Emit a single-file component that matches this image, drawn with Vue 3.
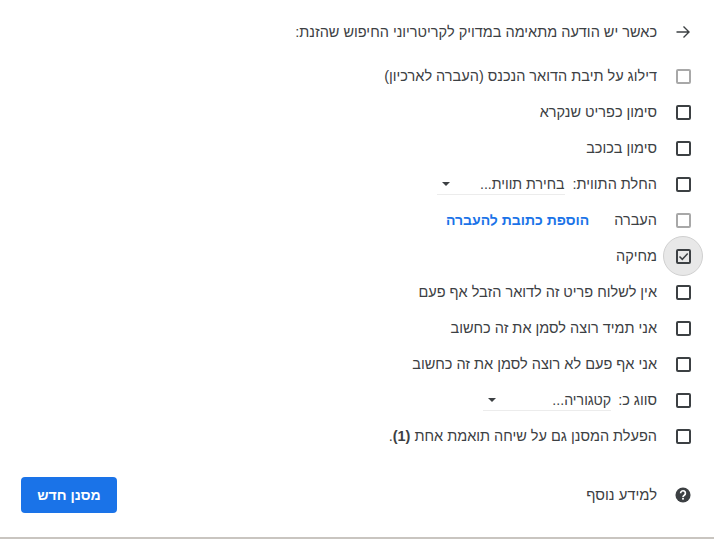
<script setup>
const rows = [
  { id: 1, label: 'דילוג על תיבת הדואר הנכנס (העברה לארכיון)', muted: true },
  { id: 2, label: 'סימון כפריט שנקרא' },
  { id: 3, label: 'סימון בכוכב' },
  { id: 4, label: 'החלת התווית:', select: 'בחירת תווית...', selectClass: 'sel-label' },
  { id: 5, label: 'העברה', link: 'הוספת כתובת להעברה', muted: true },
  { id: 6, label: 'מחיקה', checked: true },
  { id: 7, label: 'אין לשלוח פריט זה לדואר הזבל אף פעם' },
  { id: 8, label: 'אני תמיד רוצה לסמן את זה כחשוב' },
  { id: 9, label: 'אני אף פעם לא רוצה לסמן את זה כחשוב' },
  { id: 10, label: 'סווג כ:', select: 'קטגוריה...', selectClass: 'sel-cat' },
  { id: 11, label: 'הפעלת המסנן גם על שיחה תואמת אחת', count: '(1)' }
]
</script>

<template>
  <div class="page" dir="rtl">
    <header class="head">
      <span class="lead">
        <svg width="16" height="16" viewBox="0 0 16 16" fill="none" stroke="#3c4043" stroke-width="1.4">
          <path d="M1.5 8H14M8.5 2.5 14 8l-5.5 5.5" />
        </svg>
      </span>
      <span>כאשר יש הודעה מתאימה במדויק לקריטריוני החיפוש שהזנת:</span>
    </header>

    <ul class="list">
      <li v-for="r in rows" :key="r.id" class="row">
        <span class="lead">
          <span class="box" :class="{ muted: r.muted, on: r.checked }">
            <svg v-if="r.checked" width="11" height="11" viewBox="0 0 11 11" fill="none" stroke="#3c4043" stroke-width="1.5">
              <path d="M1.5 5.5 4.3 8.3 9.7 2.6" />
            </svg>
          </span>
        </span>
        <span>{{ r.label }}<template v-if="r.count">{{ ' ' }}<b class="count">{{ r.count }}</b>.</template></span>
        <span v-if="r.select" class="select" :class="r.selectClass">
          <span class="sel-text">{{ r.select }}</span>
          <i class="caret"></i>
        </span>
        <a v-if="r.link" class="link" href="#">{{ r.link }}</a>
      </li>
    </ul>

    <footer class="foot">
      <span class="lead">
        <svg width="18" height="18" viewBox="0 0 18 18">
          <circle cx="9" cy="9" r="8.5" fill="#3c4043" />
          <path d="M6.3 7a2.7 2.7 0 1 1 4.2 2.2c-.9.6-1.5 1-1.5 2" fill="none" stroke="#fff" stroke-width="1.9" />
          <rect x="8" y="12.2" width="2" height="2" fill="#fff" />
        </svg>
      </span>
      <span class="more">למידע נוסף</span>
      <button class="create" type="button">מסנן חדש</button>
    </footer>
    <div class="strip"></div>
  </div>
</template>

<style>
html, body { margin: 0; background: #fff; }
</style>

<style scoped>
.page {
  width: 714px;
  height: 539px;
  box-sizing: border-box;
  padding: 14px 0 0;
  position: relative;
  isolation: isolate;
  overflow: hidden;
  font: 14.5px/20px "Liberation Sans", Roboto, sans-serif;
  color: #3c4043;
  background: #fff;
}
.head, .row, .foot {
  display: flex;
  align-items: center;
  height: 36px;
  padding-right: 23px;
}
.lead {
  flex: none;
  width: 16px;
  margin-left: 18px;
  display: flex;
  justify-content: center;
  align-items: center;
  position: relative;
}
.list { list-style: none; margin: 8px 0 0; padding: 0; }
.box {
  width: 15px;
  height: 15px;
  box-sizing: border-box;
  border: 2px solid #3c4043;
  border-radius: 2px;
  display: flex;
  align-items: center;
  justify-content: center;
  position: relative;
}
.box.muted { border-color: #a8a8a8; }
.box.on::before {
  content: "";
  position: absolute;
  left: 50%;
  top: 50%;
  width: 40px;
  height: 40px;
  box-sizing: border-box;
  margin: -20px 0 0 -20px;
  border-radius: 50%;
  background: #e8e8e8;
  border: 1px solid #d0d0d0;
  z-index: -1;
}
.box svg { flex: none; }
.select {
  display: flex;
  justify-content: space-between;
  align-items: center;
  height: 20px;
  border-bottom: 1px solid #ececec;
  margin-right: 8px;
  padding-left: 5px;
  width: 123px;
}
.sel-text { font-size: 14.2px; }
.sel-cat { margin-right: 7px; }
.caret {
  width: 0;
  height: 0;
  border: 4px solid transparent;
  border-top-color: #3c4043;
  border-bottom: 0;
}
.link {
  margin-right: 25px;
  color: #1a73e8;
  font-size: 14px;
  font-weight: 700;
  text-decoration: none;
}
.count { font-weight: 700; }
.more { font-size: 14.8px; }
.foot {
  margin-top: 23px;
}
.create {
  margin-right: auto;
  margin-left: 21px;
  width: 96px;
  height: 36px;
  border: 0;
  border-radius: 4px;
  background: #1a73e8;
  color: #fff;
  font: 700 14px/20px "Liberation Sans", Roboto, sans-serif;
}
.strip {
  position: absolute;
  left: 0;
  right: 0;
  bottom: 0;
  height: 2px;
  background: #c9c5c0;
}
</style>
